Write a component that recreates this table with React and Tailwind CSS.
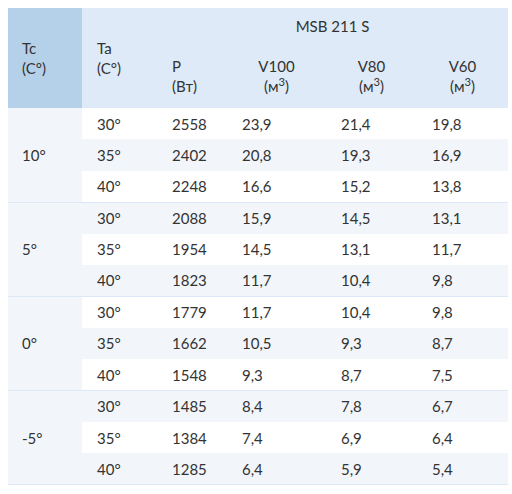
import React from 'react';

const groups = [
    {
        tc: '10°',
        rows: [
            ['30°', '2558', '23,9', '21,4', '19,8'],
            ['35°', '2402', '20,8', '19,3', '16,9'],
            ['40°', '2248', '16,6', '15,2', '13,8'],
        ],
    },
    {
        tc: '5°',
        rows: [
            ['30°', '2088', '15,9', '14,5', '13,1'],
            ['35°', '1954', '14,5', '13,1', '11,7'],
            ['40°', '1823', '11,7', '10,4', '9,8'],
        ],
    },
    {
        tc: '0°',
        rows: [
            ['30°', '1779', '11,7', '10,4', '9,8'],
            ['35°', '1662', '10,5', '9,3', '8,7'],
            ['40°', '1548', '9,3', '8,7', '7,5'],
        ],
    },
    {
        tc: '-5°',
        rows: [
            ['30°', '1485', '8,4', '7,8', '6,7'],
            ['35°', '1384', '7,4', '6,9', '6,4'],
            ['40°', '1285', '6,4', '5,9', '5,4'],
        ],
    },
];

const App = () => {
    let index = 0;

    return (
        <div className="p-2 bg-white min-h-screen" style={{ fontFamily: 'Lato, "Open Sans", sans-serif' }}>
            <table className="w-[500px] table-fixed border-collapse text-[15px] leading-5 text-[#333]">
                <colgroup>
                    <col className="w-[74px]" />
                    <col className="w-[75px]" />
                    <col className="w-[70px]" />
                    <col className="w-[99px]" />
                    <col className="w-[91px]" />
                    <col className="w-[91px]" />
                </colgroup>
                <thead>
                    <tr className="h-[36px] bg-[#deeaf8]">
                        <th rowSpan={2} className="bg-[#b5d1e9] pl-[14px] text-left font-normal align-middle">
                            Tc<br />(C°)
                        </th>
                        <th rowSpan={2} className="pl-[15px] text-left font-normal align-middle">
                            Ta<br />(C°)
                        </th>
                        <th colSpan={4} className="text-center font-normal align-middle">MSB 211 S</th>
                    </tr>
                    <tr className="h-[64px] bg-[#deeaf8]">
                        <th className="pl-[15px] text-left font-normal">P<br />(Вт)</th>
                        <th className="text-center font-normal">V100<br />(м<sup>3</sup>)</th>
                        <th className="text-center font-normal">V80<br />(м<sup>3</sup>)</th>
                        <th className="text-center font-normal">V60<br />(м<sup>3</sup>)</th>
                    </tr>
                </thead>
                <tbody>
                    {groups.map((group) =>
                        group.rows.map((row, i) => {
                            index += 1;
                            const last = i === group.rows.length - 1;
                            return (
                                <tr
                                    key={group.tc + row[0]}
                                    className={`h-[31.4px] ${index % 2 === 0 ? 'bg-[#f2f6fb]' : 'bg-white'} ${last ? 'border-b border-[#dce8f5]' : ''}`}
                                >
                                    {i === 0 && (
                                        <td rowSpan={3} className="bg-[#f2f6fb] pl-[14px] align-middle border-b border-[#dce8f5]">
                                            {group.tc}
                                        </td>
                                    )}
                                    {row.map((cell, j) => (
                                        <td key={j} className="pl-[15px]">{cell}</td>
                                    ))}
                                </tr>
                            );
                        })
                    )}
                </tbody>
            </table>
        </div>
    );
};

export default App;
